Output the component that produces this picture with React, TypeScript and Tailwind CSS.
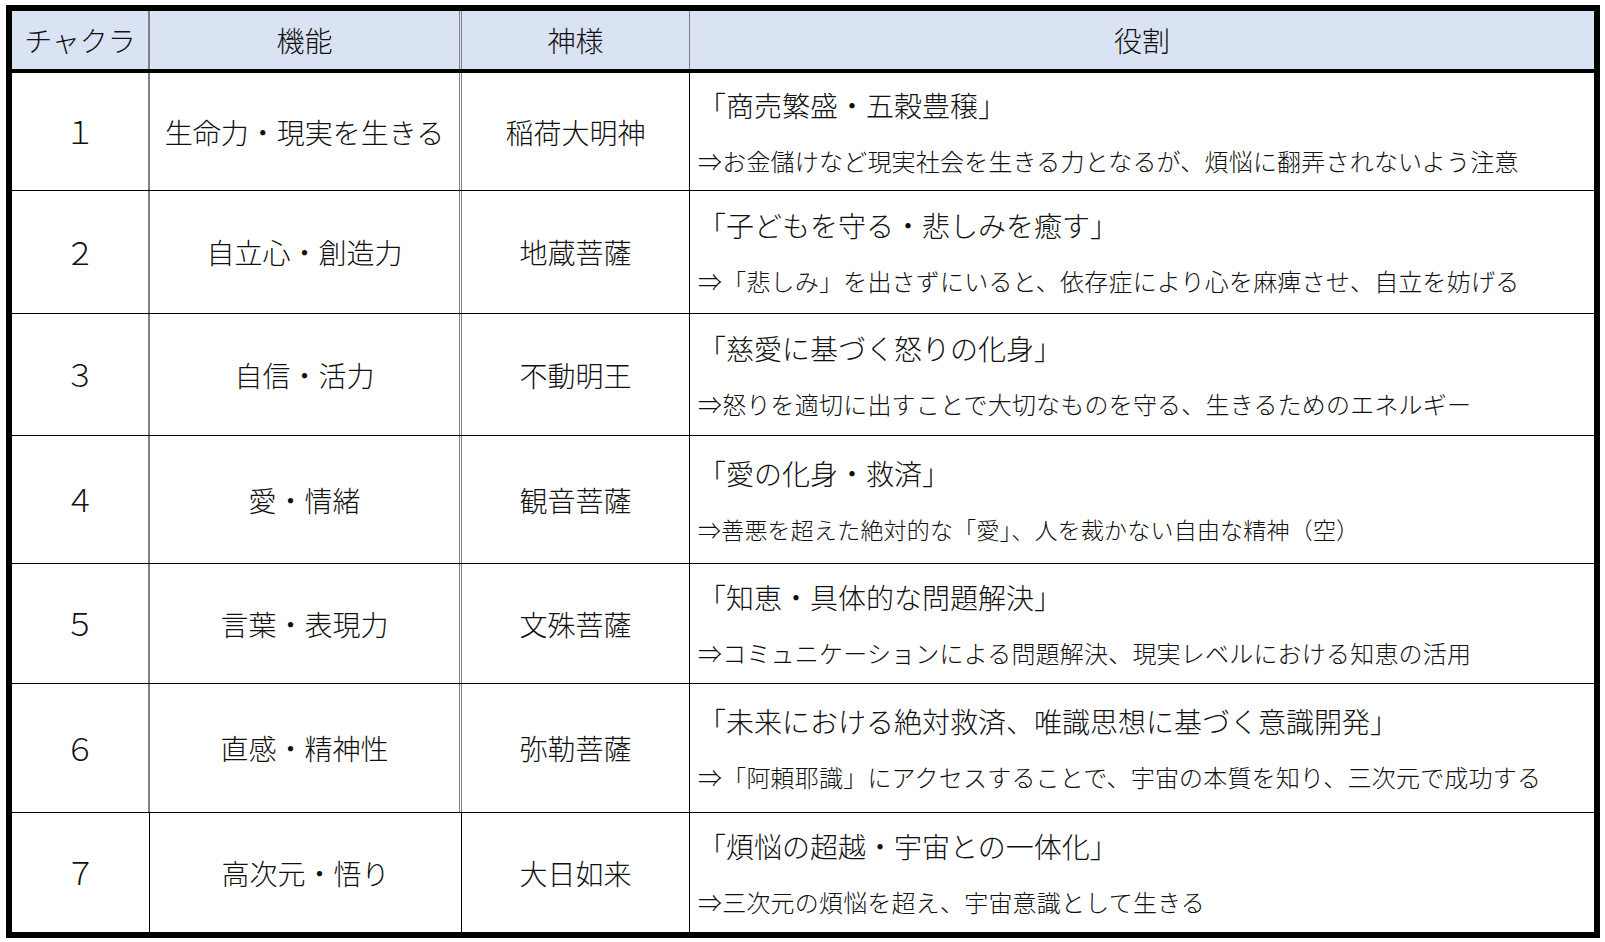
const rows = [
  {
    no: "１",
    func: "生命力・現実を生きる",
    god: "稲荷大明神",
    title: "「商売繁盛・五穀豊穣」",
    note: "⇒お金儲けなど現実社会を生きる力となるが、煩悩に翻弄されないよう注意",
    h: "h-[118px]",
    noteSize: "text-[24px]",
  },
  {
    no: "２",
    func: "自立心・創造力",
    god: "地蔵菩薩",
    title: "「子どもを守る・悲しみを癒す」",
    note: "⇒「悲しみ」を出さずにいると、依存症により心を麻痺させ、自立を妨げる",
    h: "h-[123px]",
    noteSize: "text-[24px]",
  },
  {
    no: "３",
    func: "自信・活力",
    god: "不動明王",
    title: "「慈愛に基づく怒りの化身」",
    note: "⇒怒りを適切に出すことで大切なものを守る、生きるためのエネルギー",
    h: "h-[122px]",
    noteSize: "text-[24px]",
  },
  {
    no: "４",
    func: "愛・情緒",
    god: "観音菩薩",
    title: "「愛の化身・救済」",
    note: "⇒善悪を超えた絶対的な「愛」、人を裁かない自由な精神（空）",
    h: "h-[128px]",
    noteSize: "text-[23px]",
  },
  {
    no: "５",
    func: "言葉・表現力",
    god: "文殊菩薩",
    title: "「知恵・具体的な問題解決」",
    note: "⇒コミュニケーションによる問題解決、現実レベルにおける知恵の活用",
    h: "h-[120px]",
    noteSize: "text-[24px]",
  },
  {
    no: "６",
    func: "直感・精神性",
    god: "弥勒菩薩",
    title: "「未来における絶対救済、唯識思想に基づく意識開発」",
    note: "⇒「阿頼耶識」にアクセスすることで、宇宙の本質を知り、三次元で成功する",
    h: "h-[129px]",
    noteSize: "text-[24px]",
  },
  {
    no: "７",
    func: "高次元・悟り",
    god: "大日如来",
    title: "「煩悩の超越・宇宙との一体化」",
    note: "⇒三次元の煩悩を超え、宇宙意識として生きる",
    h: "h-[119px]",
    noteSize: "text-[24px]",
  },
];

export default function App() {
  return (
    <div
      className="min-h-screen bg-white pl-[6px] pt-[5px] font-light text-[#111]"
      style={{ fontFamily: '"Noto Sans CJK JP", "Noto Sans", sans-serif' }}
    >
      <div className="w-[1594px] border-[6px] border-black">
        {/* header */}
        <div className="grid h-[62px] grid-cols-[138px_312px_228px_1fr] border-b-4 border-black bg-[#dae3f3] text-[28px]">
          <div className="flex items-center justify-center border-r-2 border-[#808080]">チャクラ</div>
          <div className="flex items-center justify-center border-r-[3px] border-double border-[#808080]">機能</div>
          <div className="flex items-center justify-center border-r border-[#808080]">神様</div>
          <div className="flex items-center justify-center">役割</div>
        </div>

        {rows.map((r, i) => {
          const last = i === rows.length - 1;
          return (
            <div
              key={r.no}
              className={`grid grid-cols-[138px_312px_228px_1fr] ${r.h} ${last ? "" : "border-b border-black"}`}
            >
              <div
                className={`flex items-center justify-center text-[31px] ${
                  last ? "border-r border-black" : "border-r-2 border-[#808080]"
                }`}
              >
                {r.no}
              </div>
              <div
                className={`flex items-center justify-center text-[28px] ${
                  last ? "border-r border-black" : "border-r-[3px] border-double border-[#808080]"
                }`}
              >
                {r.func}
              </div>
              <div className="flex items-center justify-center border-r border-black text-[28px]">{r.god}</div>
              <div className="flex flex-col justify-center gap-[22px] pl-[8px]">
                <div className="text-[28px] leading-[36px] whitespace-nowrap">{r.title}</div>
                <div className={`${r.noteSize} leading-[32px] tracking-[0.2px] whitespace-nowrap`}>{r.note}</div>
              </div>
            </div>
          );
        })}
      </div>
    </div>
  );
}
